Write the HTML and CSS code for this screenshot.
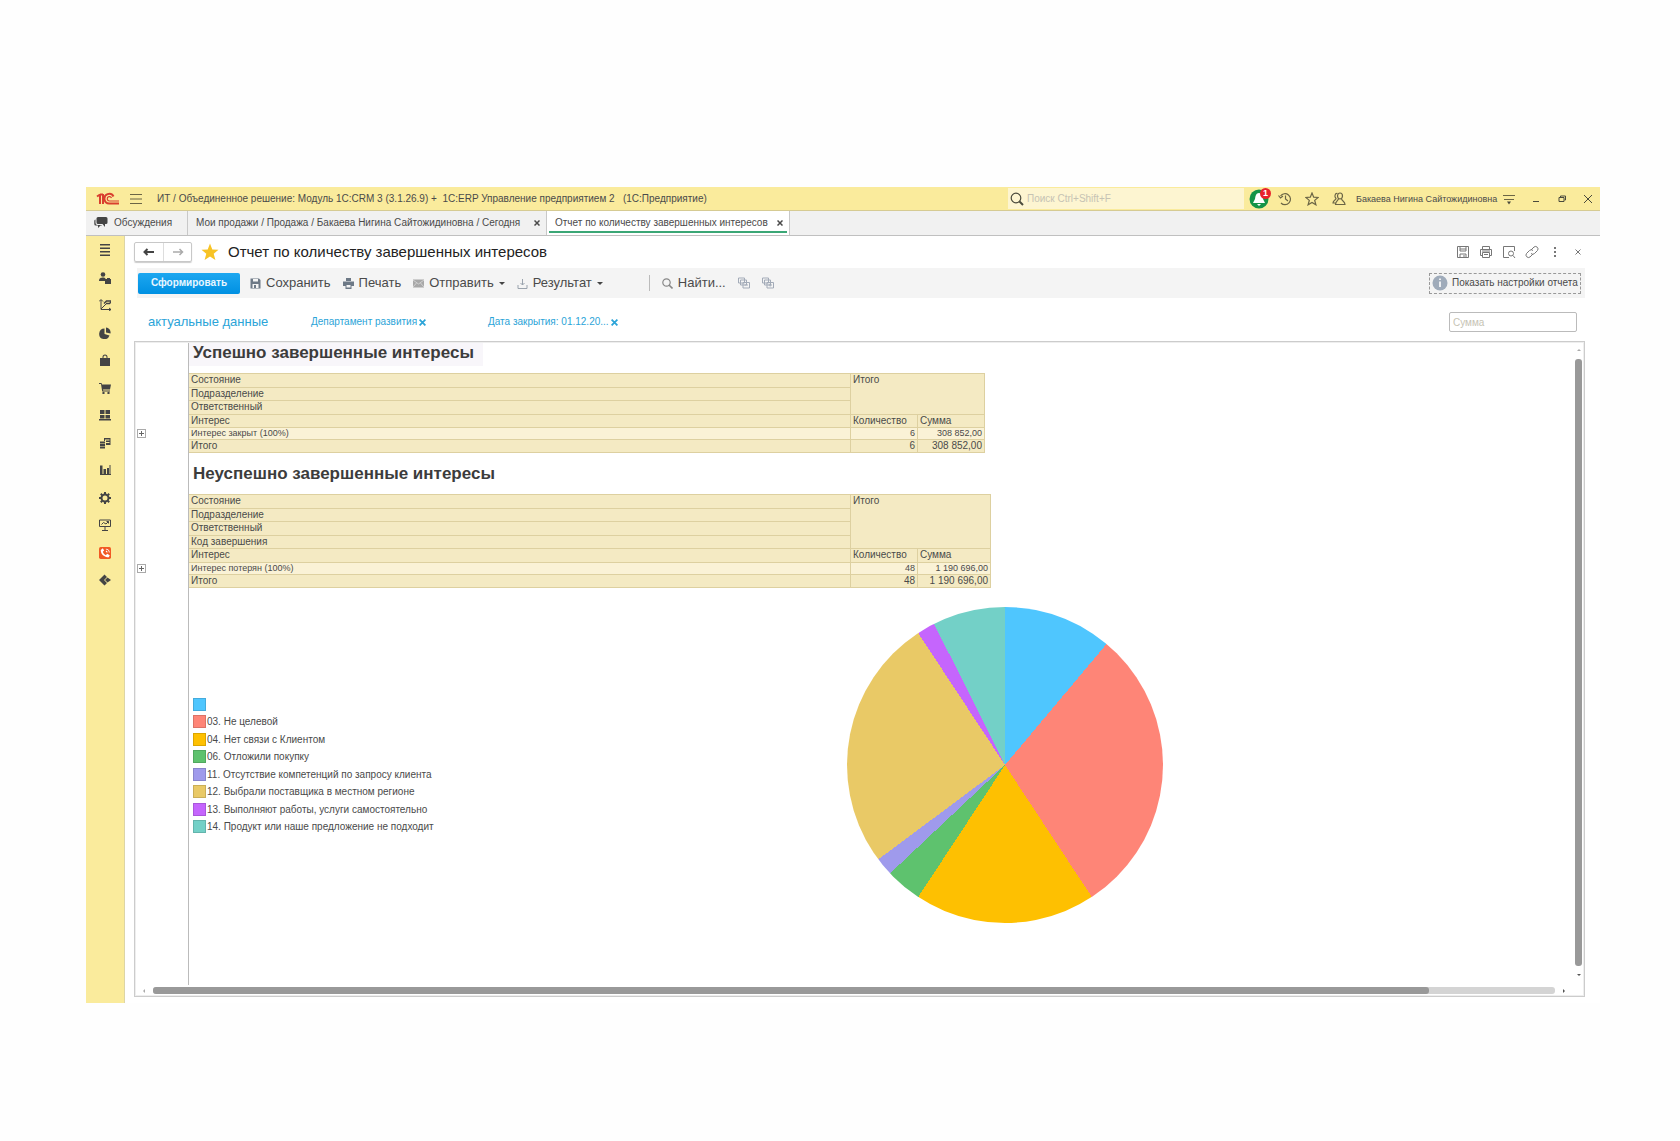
FILE: index.html
```html
<!DOCTYPE html>
<html lang="ru">
<head>
<meta charset="utf-8">
<title>Отчет по количеству завершенных интересов</title>
<link rel="stylesheet" href="styles.css">
</head>
<body>
<div class="app">
  <header class="titlebar">
    <svg class="logo" viewBox="0 0 24 14" width="24" height="14" fill="none" stroke="#d9402f" stroke-width="2"><path d="M1 4.500l3-2M4 2v10M7 2v10M4 2.500h3" /><path d="M17.500 4.500A4.800 4.800 0 1 0 13.500 11.500H23"/><path d="M15.500 6a2.200 2.200 0 1 0-2 3H23" stroke-width="1.200"/></svg>
    <button class="icon-btn menu" aria-label="Меню"><svg viewBox="0 0 12 12" width="12" height="12" stroke="#6b6545" fill="none"><path d="M0 1.500h12M0 6h12M0 10.500h12"/></svg></button>
    <span class="app-title">ИТ / Объединенное решение: Модуль 1С:CRM 3 (3.1.26.9) +&nbsp; 1С:ERP Управление предприятием 2 &nbsp; (1С:Предприятие)</span>
    <label class="search"><svg viewBox="0 0 14 14" width="14" height="14" stroke="#4a4a3c" fill="none"><circle cx="6" cy="6" r="4.800" stroke-width="1.200"/><path d="M9.500 9.500l3.500 3.500" stroke-width="2"/></svg><input type="text" placeholder="Поиск Ctrl+Shift+F" aria-label="Поиск"></label>
    <div class="tools">
      <button class="icon-btn bell" aria-label="Оповещения"><svg viewBox="0 0 20 20" width="20" height="20"><circle cx="10" cy="10" r="9.500" fill="#149447"/><path d="M10 4c-3 0-3.500 3-4 6l-2 4h12l-2-4c-.5-3-1-6-4-6zM8 15h4l-2 2z" fill="#fff"/></svg><span class="badge">1</span></button>
      <button class="icon-btn" aria-label="История"><svg viewBox="0 0 14 14" width="14" height="14" stroke="#6b6545" fill="none" stroke-width="1.200"><path d="M2.500 4A5.500 5.500 0 1 1 3 11M.5 3.500l2 2.500L5 4M7.500 3.500V7l2.500 2"/></svg></button>
      <button class="icon-btn" aria-label="Избранное"><svg viewBox="0 0 14 14" width="14" height="14" stroke="#6b6545" fill="none" stroke-width="1.200"><path d="M7 1l1.700 4.200 4.500.3-3.500 2.900 1.200 4.400L7 10.400l-3.900 2.400 1.200-4.400L.8 5.500l4.500-.3z"/></svg></button>
      <button class="icon-btn" aria-label="Пользователи"><svg viewBox="0 0 14 14" width="14" height="14" stroke="#6b6545" fill="none" stroke-width="1.200"><ellipse cx="8" cy="4" rx="2.500" ry="3"/><path d="M6.500 6.500C6.500 8.500 3.500 9 3.500 12.500h9.500c0-3.500-3.500-3.500-3.500-6M5.500 1.500c-2.500-.5-3.500 3-1.500 5 0 1.500-3 1.500-3 4.500h2.500"/></svg></button>
      <span class="user">Бакаева Нигина Сайтожидиновна</span>
      <button class="icon-btn" aria-label="Сервис"><svg viewBox="0 0 12 12" width="12" height="12" stroke="#6b6545" fill="none"><path d="M0 2.500h12M1 6.500h10"/><path d="M4 8.500h4l-2 3z" fill="#4a4a3c" stroke="none"/></svg></button>
    </div>
    <div class="window-tools">
      <button class="icon-btn" aria-label="Свернуть"><svg viewBox="0 0 8 8" width="8" height="8" stroke="#4a4a3c"><path d="M1 6.500h6"/></svg></button>
      <button class="icon-btn" aria-label="Восстановить"><svg viewBox="0 0 8 8" width="8" height="8" stroke="#4a4a3c" fill="none"><path d="M1 2.500h5v4H1zM2.500 2V1h5v4H6.500"/></svg></button>
      <button class="icon-btn" aria-label="Закрыть"><svg viewBox="0 0 8 8" width="8" height="8" stroke="#4a4a3c"><path d="M0 0l8 8M8 0L0 8"/></svg></button>
    </div>
  </header>

  <nav class="tabs">
    <a class="tab talks" href="#"><svg viewBox="0 0 14 12" width="14" height="12" fill="#444"><path d="M4 0h8a1.500 1.500 0 0 1 1.500 1.500v4A1.500 1.500 0 0 1 12 7H11v3L8.500 7H4a1.500 1.500 0 0 1-1.500-1.500v-4A1.500 1.500 0 0 1 4 0z"/><path d="M1.500 2.500A1.500 1.500 0 0 0 .3 4v3a1.500 1.500 0 0 0 1.500 1.500H4V11l2.500-2.500H8L7.500 8H3.500a2 2 0 0 1-2-2z"/></svg>Обсуждения</a>
    <a class="tab sales" href="#">Мои продажи / Продажа / Бакаева Нигина Сайтожидиновна / Сегодня<svg class="cross" viewBox="0 0 6 6" width="6" height="6"><path d="M.5.5l5 5M5.500.5l-5 5"/></svg></a>
    <a class="tab active" href="#">Отчет по количеству завершенных интересов<svg class="cross" viewBox="0 0 6 6" width="6" height="6"><path d="M.5.5l5 5M5.500.5l-5 5"/></svg></a>
  </nav>

  <div class="body">
    <nav class="sidebar">
      <a href="#" aria-label="Главное"><svg viewBox="0 0 12 12"><path d="M1 0h10v1.500H1zM1 3.500h10V5H1zM1 7h10v1.500H1zM1 10.500h10V12H1z"/></svg></a>
      <a href="#" aria-label="CRM"><svg viewBox="0 0 12 12"><circle cx="4" cy="2.500" r="2.300"/><path d="M0 9c0-3 2-3.500 4-3.500 1.500 0 2 .5 2.500 1V9zM7 7h1V6h3v1h1.500v5H6V7zM9 7h1z"/></svg></a>
      <a href="#" aria-label="Планирование"><svg viewBox="0 0 12 12" fill="none" stroke="#444"><path d="M2 1v9.500h10M2 10L7 5M0 2.500L2 .5l2 2M10 9l2 1.500-2 1.500"/><path d="M5 4.500L7.500 2H12M7 4.500h3.500L12 3" stroke-width="1.500"/></svg></a>
      <a href="#" aria-label="Отчеты"><svg viewBox="0 0 12 12"><path d="M5.500 1.500v5.500l5 1.500A5.300 5.300 0 1 1 5.500 1.500z"/><path d="M7 .5A5 5 0 0 1 11.500 6.500L7 5.500z"/></svg></a>
      <a href="#" aria-label="Продажи"><svg viewBox="0 0 12 12"><path d="M1 4h2.500V3a2.500 2.500 0 0 1 5 0v1H11v8H1zM4.500 4h3V3a1.500 1.500 0 0 0-3 0z"/></svg></a>
      <a href="#" aria-label="Закупки"><svg viewBox="0 0 12 12"><path d="M0 1h2.500L3 2.500h9L11 7.500H4L4.200 8.500H11v1H3.200L2 2H0z"/><circle cx="4.500" cy="11" r="1.200"/><circle cx="9.500" cy="11" r="1.200"/></svg></a>
      <a href="#" aria-label="Склад"><svg viewBox="0 0 12 12"><path d="M1 1h4.500v4H1zM6.500 1H11v4H6.500zM1 6h4.500v3.500H1zM6.500 6H11v3.500H6.500zM0 10h12v1.500H0z"/></svg></a>
      <a href="#" aria-label="Производство"><svg viewBox="0 0 12 12"><path d="M1 4.500h5v2H1zM1 7h5v2H1zM1 9.500h5v2H1zM6 1h5v1.500H6zM7 3.500h4V5H7zM7 6h4v2H7z"/><path d="M5 1h1v3H5zM10.500 1h1v7h-1z"/></svg></a>
      <a href="#" aria-label="Финансы"><svg viewBox="0 0 12 12"><path d="M1 1.500h2.500V10H1zM4.500 5H7v5H4.500zM8 4h2v6H8zM10.500 1h1v9h-1zM1 10h11v1H1z"/></svg></a>
      <a href="#" aria-label="Настройки"><svg viewBox="0 0 12 12" fill="none" stroke="#444"><circle cx="6" cy="6" r="3.500" stroke-width="2"/><path d="M6 0v2M6 10v2M0 6h2M10 6h2M1.800 1.800l1.400 1.400M8.800 8.800l1.400 1.400M10.200 1.800L8.800 3.200M3.200 8.800l-1.400 1.400" stroke-width="2"/></svg></a>
      <a href="#" aria-label="Показатели"><svg viewBox="0 0 12 12" fill="none" stroke="#444"><path d="M.5 1h11v6.500H.5zM6 8v3M3 11.500h6M2.500 5.500l2-2L7 5l2.500-2.500M7.500 2.500h2v2"/></svg></a>
      <a href="#" aria-label="Телефония"><svg viewBox="0 0 14 14"><rect width="14" height="14" rx="2" fill="#f15a24"/><path d="M2 3.500c0 5 4 8.500 9.500 8.500l1-2.500-3-1.500-1.500 1.500C6 8.500 5 7 4.500 5.500L6 4 4.500 1.500zM8 2c3 0 4.500 2 4.500 4.500h-1C11.500 4.500 10 3 8 3zM8 4.500c1.500 0 2 .8 2 2H9L8 5.500z" fill="#fff"/></svg></a>
      <a href="#" aria-label="Интеграции"><svg viewBox="0 0 12 12"><path d="M0 6l5.500-5.500L8 3 5 6l3 3-2.500 2.500z"/><path d="M8.500 3.500L12 6 8.500 8.500 6 6z"/></svg></a>
    </nav>

    <main class="page">
      <div class="page-head">
        <div class="history">
          <button aria-label="Назад"><svg viewBox="0 0 12 8" width="12" height="8" stroke="#444" fill="none" stroke-width="2"><path d="M1 4h10M4.500 1L1.500 4l3 3"/></svg></button>
          <button aria-label="Вперед"><svg viewBox="0 0 12 8" width="12" height="8" stroke="#aaa" fill="none" stroke-width="1.500"><path d="M1 4h10M7.500 1l3 3-3 3"/></svg></button>
        </div>
        <svg class="star" viewBox="0 0 18 18" width="18" height="18"><path d="M9 .5l2.300 6 6.200.3-4.800 4 1.700 6.200L9 13.500 3.600 17l1.700-6.200-4.800-4 6.200-.3z" fill="#f7c325"/></svg>
        <h1>Отчет по количеству завершенных интересов</h1>
        <div class="page-tools">
          <button class="icon-btn" aria-label="Сохранить"><svg viewBox="0 0 14 14" width="14" height="14"><path d="M1.500 1.500h11v11h-11zM4 1.500V6h6V1.500M4 4h6M4 12.500V9h6v3.500M8 10v2"/></svg></button>
          <button class="icon-btn" aria-label="Печать"><svg viewBox="0 0 14 14" width="14" height="14"><path d="M3.500 4V1.500h7V4M3.500 10.500h-2v-6h11v6h-2M3.500 7.500h7v5h-7zM5 9.500h4M3 6h8"/></svg></button>
          <button class="icon-btn" aria-label="Просмотр"><svg viewBox="0 0 14 14" width="14" height="14"><path d="M12.500 6V1.500h-11v11H7"/><circle cx="9" cy="8.500" r="2.500"/><path d="M11 10.500l2 2.500"/></svg></button>
          <button class="icon-btn" aria-label="Ссылка"><svg viewBox="0 0 14 14" width="14" height="14"><path d="M6 5l3-3a2.500 2.500 0 0 1 3.500 3.500l-3 3a2.500 2.500 0 0 1-3.500 0M8 9l-3 3a2.500 2.500 0 0 1-3.500-3.500l3-3a2.500 2.500 0 0 1 3.500 0"/></svg></button>
          <button class="icon-btn" aria-label="Еще"><svg viewBox="0 0 14 14" width="14" height="14"><path d="M7 2v2M7 6v2M7 10v2" stroke-width="2"/></svg></button>
          <button class="icon-btn" aria-label="Закрыть отчет"><svg viewBox="0 0 14 14" width="14" height="14"><path d="M4.500 4.500l5 5M9.500 4.500l-5 5"/></svg></button>
        </div>
      </div>

      <div class="toolbar">
        <button class="primary">Сформировать</button>
        <button class="cmd"><svg viewBox="0 0 11 11" width="11" height="11"><path d="M.5.5h8.500L10.500 2v8.500H.5z" fill="#6d7986"/><path d="M3 1h5v2.500H3zM2.500 6h6v4h-6z" fill="#f4f4f4"/><path d="M4 7h2v3H4z" fill="#6d7986"/></svg>Сохранить</button>
        <button class="cmd"><svg viewBox="0 0 11 11" width="11" height="11"><path d="M3 0h5v3H3zM0 3.500h11v4.500H0zM2.500 7h6v4h-6z" fill="#6d7986"/><path d="M3.500 7h4v2.500h-4z" fill="#f4f4f4"/></svg>Печать</button>
        <button class="cmd"><svg viewBox="0 0 11 11" width="11" height="11"><path d="M0 1.500h11v8H0z" fill="#a8a8a8"/><path d="M0 2l5.500 4L11 2M0 9l3.500-4M11 9L7.500 5" stroke="#d0d0d0" fill="none"/></svg>Отправить<i class="caret"></i></button>
        <button class="cmd"><svg viewBox="0 0 11 11" width="11" height="11" stroke="#9aa3ad" fill="none"><path d="M5.500 1v6M3.500 5l2 2 2-2M1 7v3.500h9V7"/></svg>Результат<i class="caret"></i></button>
        <span class="divider"></span>
        <button class="cmd"><svg viewBox="0 0 11 11" width="11" height="11" stroke="#888" fill="none"><circle cx="4.500" cy="4.500" r="3.700" stroke-width="1.200"/><path d="M7 7l3.500 3.500" stroke-width="1.600"/></svg>Найти...</button>
        <button class="cmd" aria-label="Свернуть группы"><svg viewBox="0 0 12 12" width="12" height="12" stroke="#a3abb8" fill="#f4f4f4"><path d="M.5 1h6v5h-6zM2.500 3h6v5h-6zM5 5.500h6.500v5.500H5zM6.500 8h3.500"/></svg></button>
        <button class="cmd" aria-label="Развернуть группы"><svg viewBox="0 0 12 12" width="12" height="12" stroke="#a3abb8" fill="#f4f4f4"><path d="M.5 1h6v5h-6zM2.500 3h6v5h-6zM5 5.500h6.500v5.500H5zM6.500 8h3.500M8.200 6.500v3"/></svg></button>
        <button class="settings"><svg viewBox="0 0 16 16" width="16" height="16"><circle cx="8" cy="8" r="7.500" fill="#9fabba"/><path d="M7.200 3.500h1.600v1.600H7.200zM7.200 6.500h1.600v5.500H7.200z" fill="#fff"/></svg>Показать настройки отчета</button>
      </div>

      <div class="filters">
        <a class="variant" href="#">актуальные данные</a>
        <a class="filter dept" href="#">Департамент развития<svg class="cross" viewBox="0 0 6 6" width="7" height="7"><path d="M.5.5l5 5M5.500.5l-5 5"/></svg></a>
        <a class="filter" href="#">Дата закрытия: 01.12.20...<svg class="cross" viewBox="0 0 6 6" width="7" height="7"><path d="M.5.5l5 5M5.500.5l-5 5"/></svg></a>
        <input class="sum" type="text" placeholder="Сумма" aria-label="Сумма">
      </div>

      <div class="report">
        <div class="sheet">
          <section class="block">
            <div class="gutter"><button class="expand" aria-label="Развернуть"></button></div>
            <div class="cells">
              <h2><span class="selected">Успешно завершенные интересы</span></h2>
              <table class="won">
                <colgroup><col class="c-name"><col class="c-count"><col class="c-sum"></colgroup>
                <tr><td>Состояние</td><td colspan="2" rowspan="3">Итого</td></tr>
                <tr><td>Подразделение</td></tr>
                <tr><td>Ответственный</td></tr>
                <tr><td>Интерес</td><td>Количество</td><td>Сумма</td></tr>
                <tr class="detail"><td>Интерес закрыт (100%)</td><td class="num">6</td><td class="num">308 852,00</td></tr>
                <tr class="total"><td>Итого</td><td class="num">6</td><td class="num">308 852,00</td></tr>
              </table>
            </div>
          </section>
          <section class="block">
            <div class="gutter"><button class="expand" aria-label="Развернуть"></button></div>
            <div class="cells">
              <h2 class="second">Неуспешно завершенные интересы</h2>
              <table class="lost">
                <colgroup><col class="c-name"><col class="c-count"><col class="c-sum"></colgroup>
                <tr><td>Состояние</td><td colspan="2" rowspan="4">Итого</td></tr>
                <tr><td>Подразделение</td></tr>
                <tr><td>Ответственный</td></tr>
                <tr><td>Код завершения</td></tr>
                <tr><td>Интерес</td><td>Количество</td><td>Сумма</td></tr>
                <tr class="detail"><td>Интерес потерян (100%)</td><td class="num">48</td><td class="num">1 190 696,00</td></tr>
                <tr class="total"><td>Итого</td><td class="num">48</td><td class="num">1 190 696,00</td></tr>
              </table>
            </div>
          </section>
          <section class="block">
            <div class="gutter"></div>
            <div class="cells chart">
              <ul class="legend">
                <li><i class="s1"></i></li>
                <li><i class="s2"></i>03. Не целевой</li>
                <li><i class="s3"></i>04. Нет связи с Клиентом</li>
                <li><i class="s4"></i>06. Отложили покупку</li>
                <li><i class="s5"></i>11. Отсутствие компетенций по запросу клиента</li>
                <li><i class="s6"></i>12. Выбрали поставщика в местном регионе</li>
                <li><i class="s7"></i>13. Выполняют работы, услуги самостоятельно</li>
                <li><i class="s8"></i>14. Продукт или наше предложение не подходит</li>
              </ul>
              <div class="pie"></div>
            </div>
          </section>
        </div>
        <div class="vscroll"><i class="arrow up"></i><div class="vthumb"></div><i class="arrow down"></i></div>
        <div class="hscroll"><i class="arrow left"></i><div class="htrack"><div class="hthumb"></div></div><i class="arrow right"></i></div>
      </div>
    </main>
  </div>
</div>
</body>
</html>
```

FILE: styles.css
```css
* { box-sizing: border-box; }
body {
  margin: 0;
  padding: 187px 80px 138px 86px;
  background: #fefefe;
  color: #4a4a4a;
  font: 10px/14px "Liberation Sans", Arial, sans-serif;
}
button, input { font: inherit; color: inherit; margin: 0; padding: 0; border: 0; background: none; }
a { color: inherit; text-decoration: none; }
svg { flex: none; display: block; }
.app { background: #fff; }
.icon-btn { display: flex; align-items: center; justify-content: center; }
.cross { stroke: currentColor; stroke-width: 1.5; fill: none; }

/* window title */
.titlebar {
  display: flex;
  align-items: center;
  height: 24px;
  padding: 0 8px 0 10px;
  background: #faeb9c;
  border-bottom: 1px solid #d6cb93;
  white-space: nowrap;
}
.menu { margin: 0 15px 0 10px; }
.app-title { flex: 1; }
.search {
  display: flex;
  align-items: center;
  gap: 3px;
  width: 236px;
  height: 21px;
  padding-left: 2px;
  background: #fdf5d1;
}
.search input { flex: 1; min-width: 0; outline: 0; }
.search input::placeholder, .sum::placeholder { color: #c6c3b4; opacity: 1; }
.tools { display: flex; align-items: center; gap: 13px; padding-left: 5px; }
.bell { position: relative; margin-right: -4px; }
.badge {
  position: absolute;
  top: -1px;
  right: -2px;
  width: 11px;
  height: 11px;
  border-radius: 50%;
  background: #e8232b;
  color: #fff;
  font: bold 9px/11px "Liberation Sans", Arial, sans-serif;
  text-align: center;
}
.user { width: 137px; margin-right: -3px; margin-left: -3px; font-size: 9px; }
.window-tools { display: flex; gap: 18px; padding-left: 17px; }

/* open windows */
.tabs {
  display: flex;
  height: 25px;
  background: #f1f1f1;
  border-bottom: 1px solid #c0c0c0;
  white-space: nowrap;
}
.tab { display: flex; align-items: center; gap: 6px; padding: 0 6px 0 8px; border-right: 1px solid #c8c8c8; }
.talks { width: 102px; }
.sales { width: 359px; justify-content: space-between; }
.active {
  width: 243px;
  justify-content: space-between;
  background: #fff;
  box-shadow: inset 2px 0 #fff, inset -2px 0 #fff, inset 0 -2px #fff, inset 0 -4px #3ba776;
}

.body { display: flex; }
.sidebar {
  display: flex;
  flex-direction: column;
  gap: 13px;
  width: 39px;
  padding-top: 7px;
  background: #faeb9c;
  border-right: 1px solid #ddd5a5;
}
.sidebar a { display: flex; align-items: center; justify-content: center; height: 14px; margin-bottom: 1px; }
.sidebar a:nth-child(even) { margin-bottom: 0; }
.sidebar svg { width: 12px; height: 12px; fill: #444; }
.sidebar svg[fill="none"] { fill: none; }

.page { flex: 1; min-width: 0; padding: 0 15px 6px 9px; }
.page-head { display: flex; align-items: center; height: 32px; }
.history { display: flex; border: 1px solid #c8c8c8; border-radius: 2px; box-shadow: 0 1px 1px #ccc; }
.history button { display: flex; align-items: center; justify-content: center; width: 28px; height: 18px; }
.history button + button { border-left: 1px solid #ddd; }
.star { margin: 0 9px; }
h1 { flex: 1; margin: 0; color: #222; font-size: 15px; font-weight: 400; line-height: 18px; white-space: nowrap; }
.page-tools { display: flex; gap: 9px; padding-right: 0; }
.page-tools svg { fill: none; stroke: #777; }

.toolbar { display: flex; align-items: center; height: 30px; margin-left: 3px; padding: 0 4px 0 1px; background: #f4f4f4; white-space: nowrap; }
.primary {
  width: 102px;
  height: 21px;
  margin-right: 10px;
  border-radius: 2px;
  background: linear-gradient(#1da7f0, #0090e2);
  color: #e8f6ff;
  font-weight: 700;
}
.cmd { display: flex; align-items: center; gap: 5px; margin-right: 12px; font-size: 13px; line-height: 16px; }
.caret { border: 3px solid transparent; border-top-color: #444; border-bottom: 0; }
.divider { width: 1px; height: 16px; margin: 0 12px 0 34px; background: #bbb; }
.settings {
  display: flex;
  align-items: center;
  gap: 4px;
  width: 152px;
  height: 21px;
  margin-left: auto;
  padding-left: 2px;
  border: 1px dashed #999;
}

.filters { display: flex; align-items: center; height: 43px; padding: 5px 8px 0 14px; color: #2ba4d8; white-space: nowrap; }
.variant { width: 163px; font-size: 13px; }
.filter { display: flex; align-items: center; gap: 2px; }
.dept { width: 177px; }
.sum { width: 128px; height: 20px; margin-left: auto; padding: 0 3px; border: 1px solid #bbb; border-radius: 2px; color: #444; }

/* spreadsheet */
.report {
  display: grid;
  grid-template-columns: 1fr 10px;
  grid-template-rows: auto 11px;
  border: 1px solid #ccc;
  outline: 1px solid #eee;
  outline-offset: -2px;
}
.block { display: grid; grid-template-columns: 54px 1fr; }
.gutter { display: flex; flex-direction: column; justify-content: flex-end; align-items: flex-start; padding: 0 0 15px 2px; border-right: 1px solid #bbb; }
.expand {
  width: 9px;
  height: 9px;
  border: 1px solid #aaa;
  background: linear-gradient(#666, #666) center / 5px 1px no-repeat, linear-gradient(#666, #666) center / 1px 5px no-repeat;
}
h2 { display: flex; margin: 0; height: 31px; color: #3c3c3c; font-size: 17px; line-height: 22px; }
.selected { padding: 0 9px 0 4px; height: 24px; background: #f8f6fa; }
.second { height: 41px; padding: 10px 0 0 4px; }
table { border-collapse: separate; border-spacing: 0; table-layout: fixed; background: #f4eac3; border-top: 1px solid #ddd0a0; }
.won { width: 796px; }
.lost { width: 802px; }
.c-name { width: 662px; }
.c-count { width: 67px; }
td { height: 14px; padding: 0 2px; border-right: 1px solid #ddd0a0; border-bottom: 1px solid #ddd0a0; font-size: 10px; line-height: 12px; vertical-align: top; white-space: nowrap; }
tr:nth-child(even) td, .total td { height: 13px; }
tr.detail td { height: 12px; background: #faf2d6; font-size: 9px; line-height: 11px; }
.num { text-align: right; }

.chart { display: flex; align-items: flex-start; height: 397px; padding: 19px 0 0 4px; }
.legend { display: flex; flex-direction: column; justify-content: space-between; width: 654px; height: 135px; margin: 91px 0 0; padding: 0; list-style: none; font-size: 10px; line-height: 13px; }
.legend li { display: flex; gap: 1px; height: 13px; }
.legend i { width: 13px; height: 13px; border: 1px solid #0002; }
.s1 { background: #4fc6fe; }
.s2 { background: #fe8577; }
.s3 { background: #fec001; }
.s4 { background: #5ec26e; }
.s5 { background: #9f9aec; }
.s6 { background: #e9c966; }
.s7 { background: #c565fd; }
.s8 { background: #73d0c7; }
.pie {
  width: 316px;
  height: 316px;
  border-radius: 50%;
  background: conic-gradient(
    #4fc6fe 0 40deg, #fe8577 0 146.67deg, #fec001 0 213.33deg, #5ec26e 0 226.67deg,
    #9f9aec 0 233.33deg, #e9c966 0 326.67deg, #c565fd 0 333.33deg, #73d0c7 0);
}

.vscroll { display: flex; flex-direction: column; align-items: center; gap: 8px; padding: 7px 2px 9px 1px; }
.vthumb { flex: 1; width: 7px; border-radius: 3px; background: #999; }
.hscroll { grid-column: 1 / -1; display: flex; align-items: center; gap: 8px; padding: 0 19px 0 8px; }
.htrack { flex: 1; height: 7px; border-radius: 3px; background: #d4d4d4; }
.hthumb { width: 91%; height: 7px; border-radius: 3px; background: #999; }
.arrow { flex: none; border: 2px solid transparent; }
.up { border-bottom-color: #aaa; border-top: 0; }
.down { border-top-color: #555; border-bottom: 0; }
.left { border-right-color: #aaa; border-left: 0; }
.right { border-left-color: #555; border-right: 0; }
```
